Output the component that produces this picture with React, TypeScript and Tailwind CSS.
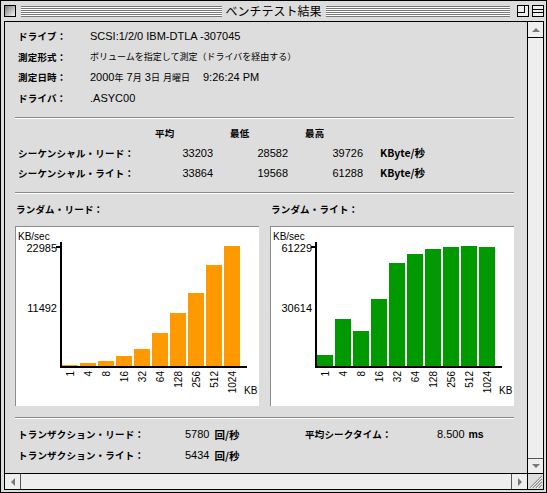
import React from 'react';

const jp = "font-['Noto_Sans_CJK_JP',sans-serif]";
const lat = "font-['Liberation_Sans','Noto_Sans_CJK_JP',sans-serif] text-[11px]";
const label = "font-['Noto_Sans_CJK_JP',sans-serif] text-[9.5px] font-bold tracking-[0.2px] whitespace-nowrap";

const sizes = ['1', '4', '8', '16', '32', '64', '128', '256', '512', '1024'];

type ChartProps = { heights: number[]; max: string; mid: string; color: string };

// bar chart drawn in box coordinates (0,0 = outer corner of the white box)
const Chart = ({ heights, max, mid, color }: ChartProps) => (
    <div className="w-[244px] h-[180px] bg-white border-t border-l border-[#8c8c8c]">
        <svg width={243} height={179} viewBox="1 1 243 179" className="block overflow-visible" fontFamily="'Liberation Sans', Arial, sans-serif" fill="#000">
            <text x={3} y={14} fontSize={10}>KB/sec</text>
            <text x={42} y={26} fontSize={11} textAnchor="end">{max}</text>
            <text x={42} y={86} fontSize={11} textAnchor="end">{mid}</text>
            <rect x={41} y={20} width={4} height={2} />
            {heights.map((h, i) => (
                <rect key={i} x={47 + i * 18} y={140 - h} width={16} height={h} fill={color} />
            ))}
            <rect x={45} y={16} width={2} height={126} />
            <rect x={45} y={140} width={187} height={2} />
            {sizes.map((s, i) => {
                const cx = 55 + i * 18 + 3.5;
                return (
                    <text key={s} x={cx} y={145} fontSize={10} textAnchor="end" transform={`rotate(-90 ${cx} 145)`}>
                        {s}
                    </text>
                );
            })}
            <text x={229} y={168} fontSize={10}>KB</text>
        </svg>
    </div>
);

const Separator = () => (
    <div className="ml-[10px] mr-[13px] h-[2px] border-t border-b border-t-[#8a8a8a] border-b-white"></div>
);

const Arrow = ({ dir }: { dir: 'up' | 'down' | 'left' | 'right' }) => {
    const pts = {
        up: '4,1 0,5 8,5',
        down: '0,1 8,1 4,5',
        left: '5,0 5,8 1,4',
        right: '1,0 1,8 5,4',
    }[dir];
    const vertical = dir === 'up' || dir === 'down';
    return (
        <svg width={vertical ? 8 : 6} height={vertical ? 6 : 8}>
            <polygon points={pts} fill="#777" />
        </svg>
    );
};

const App = () => {
    return (
        <div className="w-[547px] h-[493px] bg-[#dddddd] border border-black flex flex-col overflow-hidden">
            {/* Title bar */}
            <div className="relative h-[20px] flex items-center pl-[3px] pr-[2px]">
                <div className="w-[12px] h-[12px] border border-black bg-[linear-gradient(135deg,#7a7a7a,#f4f4f4)]"></div>
                <div className="flex-1 h-[11px] ml-[5px] mr-[7px] bg-[repeating-linear-gradient(to_bottom,#777_0px,#777_1px,#fff_1px,#fff_2px)]"></div>
                <div className="w-[12px] h-[12px] border border-black bg-[#eeeeee] relative">
                    <div className="w-[7px] h-[7px] border-r border-b border-black"></div>
                </div>
                <div className="w-[12px] h-[12px] ml-[3px] border border-black bg-[#eeeeee] flex flex-col justify-center gap-[2px]">
                    <div className="h-px bg-black"></div>
                    <div className="h-px bg-black"></div>
                </div>
                <div className={`absolute left-1/2 -translate-x-1/2 top-0 h-[20px] flex items-center bg-[#dddddd] px-[4px] text-[12px] text-black ${jp}`}>
                    ベンチテスト結果
                </div>
            </div>

            {/* Window body */}
            <div className="ml-[3px] mr-[2px] h-[469px] border border-black flex flex-col">
                <div className="flex h-[451px]">
                    {/* Content */}
                    <div className="w-[522px] h-[451px] bg-[#dddddd] text-black flex flex-col">
                        {/* Drive info */}
                        <div className="pt-[4px] pl-[13px]">
                            <div className="flex items-center h-[20.5px]">
                                <div className={`w-[72px] ${label}`}>ドライブ：</div>
                                <div className={lat}>SCSI:1/2/0 IBM-DTLA -307045</div>
                            </div>
                            <div className="flex items-center h-[20.5px]">
                                <div className={`w-[72px] ${label}`}>測定形式：</div>
                                <div className={`${jp} text-[9px]`}>ボリュームを指定して測定（ドライバを経由する）</div>
                            </div>
                            <div className="flex items-center h-[20.5px]">
                                <div className={`w-[72px] ${label}`}>測定日時：</div>
                                <div className={lat}>
                                    2000<span className="text-[9px]">年</span> 7<span className="text-[9px]">月</span> 3<span className="text-[9px]">日</span> <span className="text-[9px]">月曜日</span>
                                    <span className="ml-[13px]">9:26:24 PM</span>
                                </div>
                            </div>
                            <div className="flex items-center h-[20.5px]">
                                <div className={`w-[72px] ${label}`}>ドライバ：</div>
                                <div className={lat}>.ASYC00</div>
                            </div>
                        </div>

                        <div className="mt-[9px]"><Separator /></div>

                        {/* Sequential table */}
                        <div className="pl-[13px] mt-[4px]">
                            <div className="flex items-center h-[20px]">
                                <div className="w-[137px]"></div>
                                <div className={`w-[75px] ${label}`}>平均</div>
                                <div className={`w-[75px] ${label}`}>最低</div>
                                <div className={`w-[75px] ${label}`}>最高</div>
                            </div>
                            {[
                                ['シーケンシャル・リード：', '33203', '28582', '39726'],
                                ['シーケンシャル・ライト：', '33864', '19568', '61288'],
                            ].map(([name, avg, min, max]) => (
                                <div key={name} className="flex items-center h-[20px]">
                                    <div className={`w-[137px] ${label}`}>{name}</div>
                                    {[avg, min, max].map((v, i) => (
                                        <div key={i} className="w-[75px]">
                                            <div className={`w-[58px] text-right ${lat}`}>{v}</div>
                                        </div>
                                    ))}
                                    <div className={`${jp} text-[10.5px] font-bold`}>KByte/秒</div>
                                </div>
                            ))}
                        </div>

                        <div className="mt-[9px]"><Separator /></div>

                        {/* Random charts */}
                        <div className="flex items-center pl-[10px] mt-[5px] h-[20px]">
                            <div className={`w-[244px] pl-[1px] ${label}`}>ランダム・リード：</div>
                            <div className="w-[11px]"></div>
                            <div className={`w-[244px] pl-[1px] ${label}`}>ランダム・ライト：</div>
                        </div>
                        <div className="flex gap-[11px] pl-[10px] mt-[7px]">
                            <Chart
                                heights={[1, 3, 5, 10, 17, 33, 53, 73, 101, 120]}
                                max="22985"
                                mid="11492"
                                color="#ff9900"
                            />
                            <Chart
                                heights={[11, 47, 35, 67, 103, 112, 117, 119, 120, 119]}
                                max="61229"
                                mid="30614"
                                color="#009900"
                            />
                        </div>

                        <div className="mt-[11px]"><Separator /></div>

                        {/* Transactions */}
                        <div className="pl-[13px] mt-[5px]">
                            <div className="flex items-center h-[21px]">
                                <div className={`w-[167px] ${label}`}>トランザクション・リード：</div>
                                <div className="w-[120px] flex items-center">
                                    <span className={lat}>5780</span>
                                    <span className={`ml-[5px] ${jp} text-[10.5px] font-bold`}>回/秒</span>
                                </div>
                                <div className={`w-[132px] ${label}`}>平均シークタイム：</div>
                                <div className="flex items-center">
                                    <span className={lat}>8.500</span>
                                    <span className="ml-[4px] font-['Liberation_Sans',sans-serif] text-[10.5px] font-bold">ms</span>
                                </div>
                            </div>
                            <div className="flex items-center h-[21px]">
                                <div className={`w-[167px] ${label}`}>トランザクション・ライト：</div>
                                <div className="w-[120px] flex items-center">
                                    <span className={lat}>5434</span>
                                    <span className={`ml-[5px] ${jp} text-[10.5px] font-bold`}>回/秒</span>
                                </div>
                            </div>
                        </div>
                    </div>

                    {/* Vertical scrollbar */}
                    <div className="w-[16px] border-l border-black bg-[#eeeeee] flex flex-col">
                        <div className="h-[16px] border-b border-black flex items-center justify-center">
                            <Arrow dir="up" />
                        </div>
                        <div className="flex-1"></div>
                        <div className="h-[15px] border-t border-[#555] flex items-center justify-center">
                            <Arrow dir="down" />
                        </div>
                    </div>
                </div>

                {/* Horizontal scrollbar + grow box */}
                <div className="flex h-[16px] border-t border-black">
                    <div className="w-[522px] bg-[#eeeeee] flex">
                        <div className="w-[16px] border-r border-[#555] flex items-center justify-center">
                            <Arrow dir="left" />
                        </div>
                        <div className="flex-1"></div>
                        <div className="w-[16px] border-l border-[#555] flex items-center justify-center">
                            <Arrow dir="right" />
                        </div>
                    </div>
                    <div className="w-[16px] border-l border-black bg-[#dddddd] flex items-center justify-center">
                        <svg width={12} height={12}>
                            {[0, 3, 6, 9].map((o) => (
                                <line key={o} x1={12} y1={o} x2={o} y2={12} stroke="#8a8a8a" strokeWidth={1.2} />
                            ))}
                            {[1, 4, 7, 10].map((o) => (
                                <line key={o} x1={12} y1={o} x2={o} y2={12} stroke="#fff" strokeWidth={0.8} />
                            ))}
                        </svg>
                    </div>
                </div>
            </div>
        </div>
    );
};

export default App;
